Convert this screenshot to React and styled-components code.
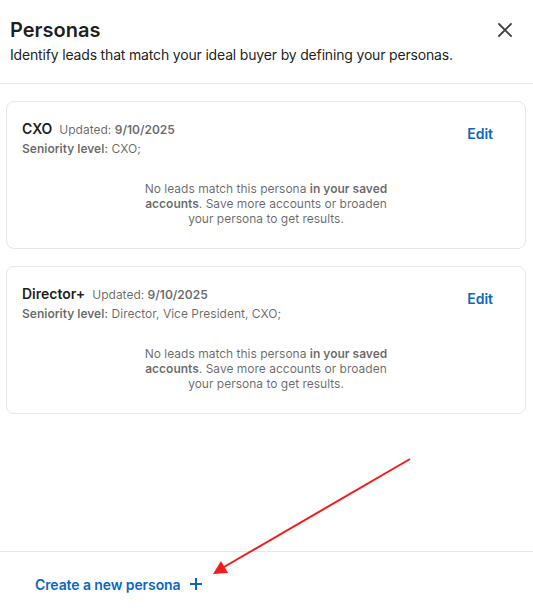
import React from "react";
import styled, { createGlobalStyle } from "styled-components";

const Global = createGlobalStyle`
  html, body { margin: 0; padding: 0; background: #fff; }
  body { font-family: Inter, "Noto Sans", "Liberation Sans", sans-serif; -webkit-font-smoothing: antialiased; }
  * { box-sizing: border-box; }
`;

const Panel = styled.div`
  position: relative;
  width: 533px;
  height: 610px;
  display: flex;
  flex-direction: column;
  background: #fff;
  overflow: hidden;
`;

const Header = styled.header`
  display: flex;
  justify-content: space-between;
  align-items: flex-start;
  padding: 18px 20px 19px 10px;
  border-bottom: 1px solid #e8e8e8;
`;

const HeaderText = styled.div`
  display: flex;
  flex-direction: column;
  gap: 4px;
`;

const Title = styled.h1`
  margin: 0;
  font-size: 20px;
  line-height: 24px;
  font-weight: 600;
  color: rgba(0, 0, 0, 0.9);
`;

const Subtitle = styled.p`
  margin: 0;
  font-size: 14px;
  line-height: 18px;
  color: rgba(0, 0, 0, 0.9);
  letter-spacing: -0.17px;
`;

const CloseButton = styled.button`
  border: 0;
  background: none;
  padding: 0;
  margin-top: 4px;
  width: 16px;
  height: 16px;
  display: flex;
  align-items: center;
  justify-content: center;
  color: rgba(0, 0, 0, 0.75);
  cursor: pointer;
`;

const List = styled.div`
  flex: 1;
  display: flex;
  flex-direction: column;
  gap: 17px;
  padding: 17px 7px 0 6px;
`;

const Card = styled.section`
  border: 1px solid #e6e6e6;
  border-radius: 8px;
  padding: 17px 15px 27px 15px;
  height: 148px;
  display: flex;
  flex-direction: column;
`;

const CardTop = styled.div`
  display: flex;
  justify-content: space-between;
  align-items: flex-start;
`;

const NameRow = styled.div`
  display: flex;
  align-items: baseline;
  gap: 7px;
`;

const Name = styled.span`
  font-size: 14px;
  font-weight: 600;
  line-height: 20px;
  color: rgba(0, 0, 0, 0.9);
`;

const Meta = styled.span`
  font-size: 12px;
  line-height: 16px;
  color: rgba(0, 0, 0, 0.6);
  b { font-weight: 600; }
`;

const Seniority = styled.div`
  margin-top: 2px;
  font-size: 12px;
  line-height: 16px;
  color: rgba(0, 0, 0, 0.6);
  b { font-weight: 600; }
`;

const EditLink = styled.a`
  margin: 5px 17px 0 0;
  font-size: 14px;
  font-weight: 600;
  line-height: 20px;
  color: #0a66c2;
  text-decoration: none;
  cursor: pointer;
`;

const Message = styled.p`
  margin: 24px auto 0;
  width: 250px;
  text-align: center;
  font-size: 12px;
  line-height: 15px;
  color: rgba(0, 0, 0, 0.6);
  b { font-weight: 600; }
`;

const Footer = styled.footer`
  border-top: 1px solid #e8e8e8;
  height: 59px;
  display: flex;
  align-items: center;
  padding: 6px 0 0 35px;
`;

const CreateButton = styled.button`
  border: 0;
  background: none;
  padding: 0;
  display: flex;
  align-items: center;
  gap: 8px;
  font-family: inherit;
  font-size: 14px;
  font-weight: 600;
  letter-spacing: -0.1px;
  color: #0a66c2;
  cursor: pointer;
`;

const ArrowLayer = styled.svg`
  position: absolute;
  left: 0;
  top: 0;
  pointer-events: none;
`;

const personas = [
  { name: "CXO", date: "9/10/2025", level: "CXO;" },
  { name: "Director+", date: "9/10/2025", level: "Director, Vice President, CXO;" },
];

export default function App() {
  return (
    <>
      <Global />
      <Panel>
        <Header>
          <HeaderText>
            <Title>Personas</Title>
            <Subtitle>Identify leads that match your ideal buyer by defining your personas.</Subtitle>
          </HeaderText>
          <CloseButton aria-label="Close">
            <svg width="14" height="14" viewBox="0 0 14 14">
              <path d="M1 1L13 13M13 1L1 13" stroke="currentColor" strokeWidth="1.8" strokeLinecap="round" />
            </svg>
          </CloseButton>
        </Header>
        <List>
          {personas.map((p) => (
            <Card key={p.name}>
              <CardTop>
                <div>
                  <NameRow>
                    <Name>{p.name}</Name>
                    <Meta>
                      Updated: <b>{p.date}</b>
                    </Meta>
                  </NameRow>
                  <Seniority>
                    <b>Seniority level:</b> {p.level}
                  </Seniority>
                </div>
                <EditLink>Edit</EditLink>
              </CardTop>
              <Message>
                No leads match this persona <b>in your saved accounts</b>. Save more accounts or broaden your persona to get results.
              </Message>
            </Card>
          ))}
        </List>
        <Footer>
          <CreateButton>
            Create a new persona
            <svg width="14" height="14" viewBox="0 0 14 14">
              <path d="M7 1V13M1 7H13" stroke="currentColor" strokeWidth="2" />
            </svg>
          </CreateButton>
        </Footer>
        <ArrowLayer width="533" height="610" viewBox="0 0 533 610">
          <line x1="410" y1="459" x2="224" y2="567" stroke="#f21c1c" strokeWidth="2" />
          <polygon points="213,574 221,561 228,573" fill="#f21c1c" />
        </ArrowLayer>
      </Panel>
    </>
  );
}
